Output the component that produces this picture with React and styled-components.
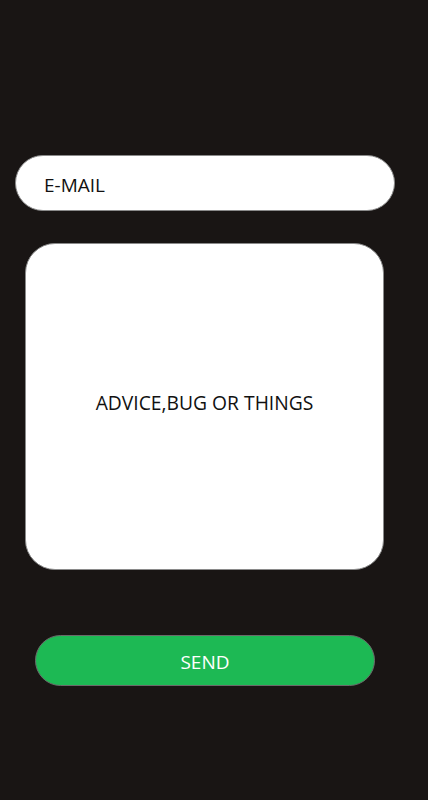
import React from "react";
import styled, { createGlobalStyle } from "styled-components";

const Global = createGlobalStyle`
  html, body { margin: 0; padding: 0; background: #191514; }
  body { font-family: "Open Sans", "Noto Sans", sans-serif; }
`;

const Page = styled.div`
  min-height: 800px;
  background: #191514;
  display: flex;
  flex-direction: column;
  padding-top: 155px;
  box-sizing: border-box;
`;

const EmailField = styled.div`
  margin-left: 15px;
  width: 380px;
  height: 56px;
  box-sizing: border-box;
  background: #fff;
  border: 1px solid #8a8a8a;
  border-radius: 28px;
  display: flex;
  align-items: center;
  padding: 3px 0 0 28px;
  font-size: 19px;
  color: #111;
`;

const MessageBox = styled.div`
  margin: 32px 0 0 25px;
  width: 359px;
  height: 327px;
  box-sizing: border-box;
  background: #fff;
  border: 1px solid #8a8a8a;
  border-radius: 30px;
  display: flex;
  align-items: center;
  justify-content: center;
  padding-bottom: 8px;
  font-size: 19.3px;
  color: #111;
`;

const SendButton = styled.button`
  margin: 65px 0 0 35px;
  width: 340px;
  height: 51px;
  box-sizing: border-box;
  background: #1db954;
  border: 1px solid #6a6a6a;
  border-radius: 26px;
  color: #fff;
  font-family: inherit;
  font-size: 19px;
  padding: 2px 0 0 0;
  cursor: pointer;
`;

export default function App() {
  return (
    <Page>
      <Global />
      <EmailField>E-MAIL</EmailField>
      <MessageBox>ADVICE,BUG OR THINGS</MessageBox>
      <SendButton>SEND</SendButton>
    </Page>
  );
}
